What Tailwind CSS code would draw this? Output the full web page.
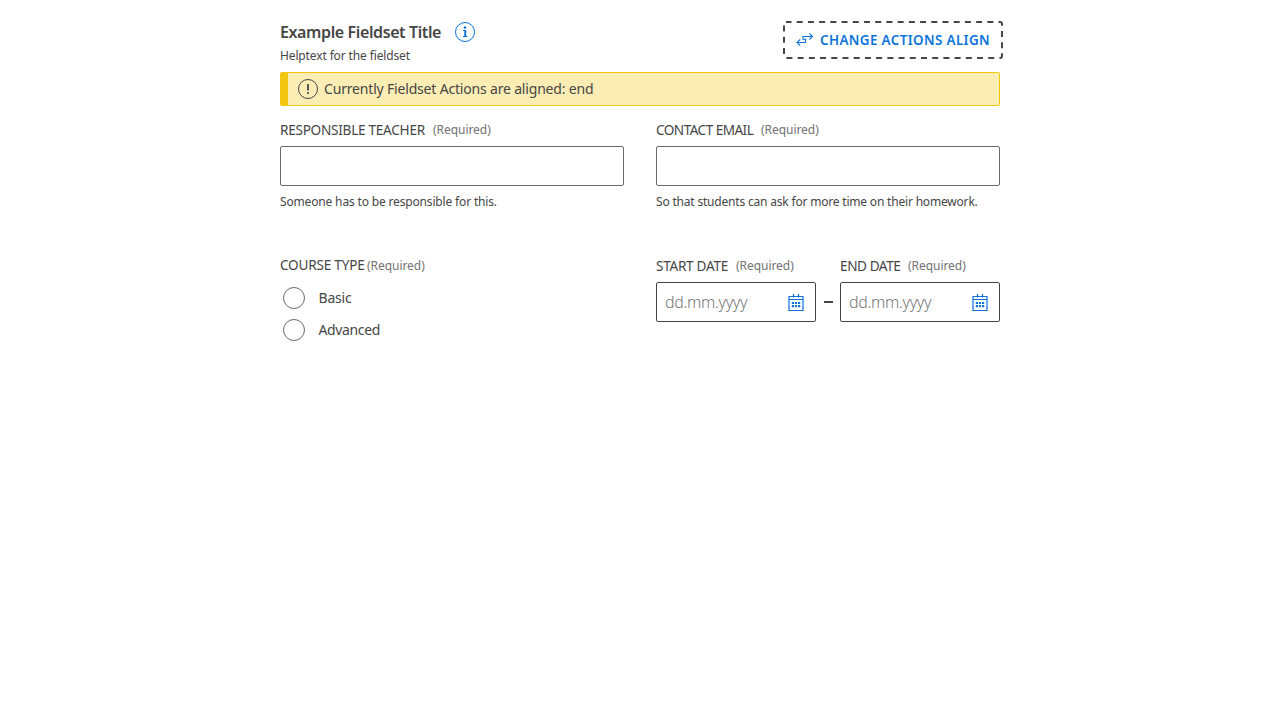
<!DOCTYPE html>
<html lang="en">
<head>
<meta charset="utf-8">
<title>Fieldset</title>
<script src="https://cdn.jsdelivr.net/npm/@tailwindcss/browser@4"></script>
</head>
<body class="bg-white font-['Noto_Sans',sans-serif] text-[#464646]">
<svg class="hidden">
  <symbol id="calendar" viewBox="0 0 16 18"><path d="M1 3.500h14v14H1zM1 6.500h14M5.500 1v3.500M10.500 1v3.500" fill="none" stroke="currentColor" stroke-width="1.200"/><path d="M3.800 9h2.200v2H3.800zM7 9h2v2H7zM10 9h2.200v2h-2.200zM3.800 12h2.200v2.200H3.800zM7 12h2v2.200H7zM10 12h2.200v2.200h-2.200z" fill="currentColor"/></symbol>
</svg>
<main class="mx-auto w-[720px] pt-5">
  <header class="flex h-[52px] justify-between">
    <div>
      <div class="flex h-6 items-center gap-3.5">
        <h1 class="w-[161px] whitespace-nowrap text-base leading-6 font-semibold tracking-[-0.39px]">Example Fieldset Title</h1>
        <svg class="size-5 text-[#0b73da]" viewBox="0 0 20 20" fill="none" stroke="currentColor"><circle cx="10" cy="10" r="9.500"/><path d="M8 8.500h2.300v6M8 14.500h4.500" stroke-width="1.200"/><path d="M10.300 8v7" stroke-width="1.800"/><circle cx="10" cy="5.500" r="1.300" fill="currentColor" stroke="none"/></svg>
      </div>
      <p class="text-xs leading-6 tracking-[-0.13px]">Helptext for the fieldset</p>
    </div>
    <button class="relative mt-px -mr-[3px] flex h-[38px] w-[220px] items-center whitespace-nowrap pl-[13px] text-[13.4px] font-semibold tracking-[0.38px] text-[#0b73da]">
      <svg class="absolute inset-0 h-[38px] w-[220px] text-[#464646]" viewBox="0 0 220 38" fill="none" stroke="currentColor" stroke-width="2"><rect x="1" y="1" width="218" height="36" rx="2" stroke-dasharray="6 5.213" stroke-dashoffset="0.5"/></svg>
      <svg class="mr-1.5 h-4 w-[18px]" viewBox="0 0 18 16" fill="none" stroke="currentColor" stroke-width="1.100"><path d="M1 10.500h8.500v-3.300h-2.500v-2.700H16.500M4.200 7.300L1 10.500l3.200 3.200M13.300 1.300l3.200 3.200-3.200 3.200"/></svg>
      <span class="pt-px">CHANGE ACTIONS ALIGN</span>
    </button>
  </header>
  <div class="flex h-[34px] items-center gap-1.5 rounded-xs border border-l-8 border-[#f2c511] bg-[#fcedb4] pl-2.5 text-sm tracking-[-0.18px]">
    <svg class="size-5" viewBox="0 0 20 20" fill="none" stroke="currentColor"><circle cx="10" cy="10" r="9.500"/><path d="M10 5v6.500" stroke-width="1.800"/><circle cx="10" cy="14" r="1.100" fill="currentColor" stroke="none"/></svg>
    <span>Currently Fieldset Actions are aligned: end</span>
  </div>
  <div class="grid grid-cols-2 gap-x-8 pt-3">
    <div>
      <div class="flex h-7 gap-2 whitespace-nowrap">
        <label for="teacher" class="w-[145px] text-[13.6px]/6 tracking-[-0.27px]">RESPONSIBLE TEACHER</label>
        <span class="text-xs/6 tracking-[-0.05px] text-[#737373]">(Required)</span>
      </div>
      <input id="teacher" class="block h-10 w-full rounded-xs border border-[#6b6b6b] px-2">
      <p class="pt-1 text-xs/6 tracking-[-0.16px]">Someone has to be responsible for this.</p>
    </div>
    <div>
      <div class="flex h-7 gap-2 whitespace-nowrap">
        <label for="email" class="w-[97px] text-[13.6px]/6 tracking-[-0.54px]">CONTACT EMAIL</label>
        <span class="text-xs/6 tracking-[-0.05px] text-[#737373]">(Required)</span>
      </div>
      <input id="email" class="block h-10 w-full rounded-xs border border-[#6b6b6b] px-2">
      <p class="pt-1 text-xs/6 tracking-[-0.19px]">So that students can ask for more time on their homework.</p>
    </div>
  </div>
  <div class="grid grid-cols-2 gap-x-8 pt-10">
    <div>
      <div class="flex h-7 gap-[3px] whitespace-nowrap">
        <span class="w-[84px] text-[13.6px]/[22px] tracking-[-0.22px]">COURSE TYPE</span>
        <span class="text-xs/6 tracking-[-0.05px] text-[#737373]">(Required)</span>
      </div>
      <label class="flex h-8 items-center gap-[13.5px] pl-[3px] text-sm tracking-[-0.2px]"><input type="radio" name="type" class="size-[22px] appearance-none rounded-full border border-[#6b6b6b]">Basic</label>
      <label class="flex h-8 items-center gap-[13.5px] pl-[3px] text-sm tracking-[-0.36px]"><input type="radio" name="type" class="size-[22px] appearance-none rounded-full border border-[#6b6b6b]">Advanced</label>
    </div>
    <div class="flex">
      <div class="w-40">
        <div class="flex h-7 gap-2 whitespace-nowrap">
          <label class="w-[72px] text-[13.6px]/6 tracking-[-0.28px]">START DATE</label>
          <span class="text-xs/6 tracking-[-0.05px] text-[#737373]">(Required)</span>
        </div>
        <div class="flex h-10 items-center justify-between rounded-xs border border-[#464646] pr-[11px] pl-2">
          <span class="text-base font-light tracking-[-0.35px] text-[#757575]">dd.mm.yyyy</span>
          <svg class="h-[18px] w-4 text-[#0b73da]"><use href="#calendar"/></svg>
        </div>
      </div>
      <div class="flex w-6 justify-center pt-[47px]"><span class="h-[1.5px] w-[9px] bg-[#464646]"></span></div>
      <div class="w-40">
        <div class="flex h-7 gap-2 whitespace-nowrap">
          <label class="w-[60px] text-[13.6px]/6 tracking-[-0.43px]">END DATE</label>
          <span class="text-xs/6 tracking-[-0.05px] text-[#737373]">(Required)</span>
        </div>
        <div class="flex h-10 items-center justify-between rounded-xs border border-[#464646] pr-[11px] pl-2">
          <span class="text-base font-light tracking-[-0.35px] text-[#757575]">dd.mm.yyyy</span>
          <svg class="h-[18px] w-4 text-[#0b73da]"><use href="#calendar"/></svg>
        </div>
      </div>
    </div>
  </div>
</main>
</body>
</html>
